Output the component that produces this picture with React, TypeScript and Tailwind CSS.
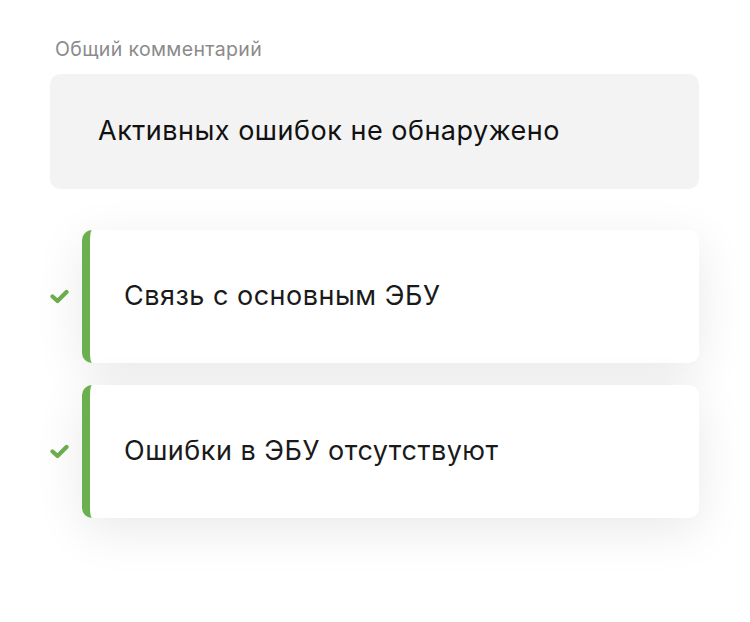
const items = ["Связь с основным ЭБУ", "Ошибки в ЭБУ отсутствуют"];

const Check = () => (
  <svg width="19" height="15" viewBox="0 0 19 15" className="shrink-0">
    <path
      d="M2.5 7.5 L7.5 12 L16.5 3"
      fill="none"
      stroke="#6bb04f"
      strokeWidth="4.2"
      strokeLinecap="round"
      strokeLinejoin="round"
    />
  </svg>
);

export default function App() {
  return (
    <div
      className="w-[750px] h-[622px] bg-white pt-[36px] pl-[50px] pr-[51px]"
      style={{ fontFamily: 'Inter, "Noto Sans", sans-serif' }}
    >
      <div className="pl-[5px] text-[19.5px] leading-[26px] tracking-[0.35px] text-[#8b8b8b]">
        Общий комментарий
      </div>
      <div className="mt-[12px] h-[115px] rounded-[10px] bg-[#f3f3f3] flex items-center pl-[48px] text-[27px] tracking-[0.5px] text-[#111]">
        Активных ошибок не обнаружено
      </div>

      <div className="mt-[41px] flex flex-col gap-[22px]">
        {items.map((t) => (
          <div key={t} className="flex items-center">
            <div className="w-[32px] flex items-center">
              <Check />
            </div>
            <div className="flex-1 h-[133px] rounded-[10px] bg-white border-l-[8px] border-[#6bb04f] shadow-[0_12px_50px_rgba(0,0,0,0.09)] flex items-center pl-[34px] text-[27px] tracking-[0.5px] text-[#1a1a1a]">
              {t}
            </div>
          </div>
        ))}
      </div>
    </div>
  );
}
